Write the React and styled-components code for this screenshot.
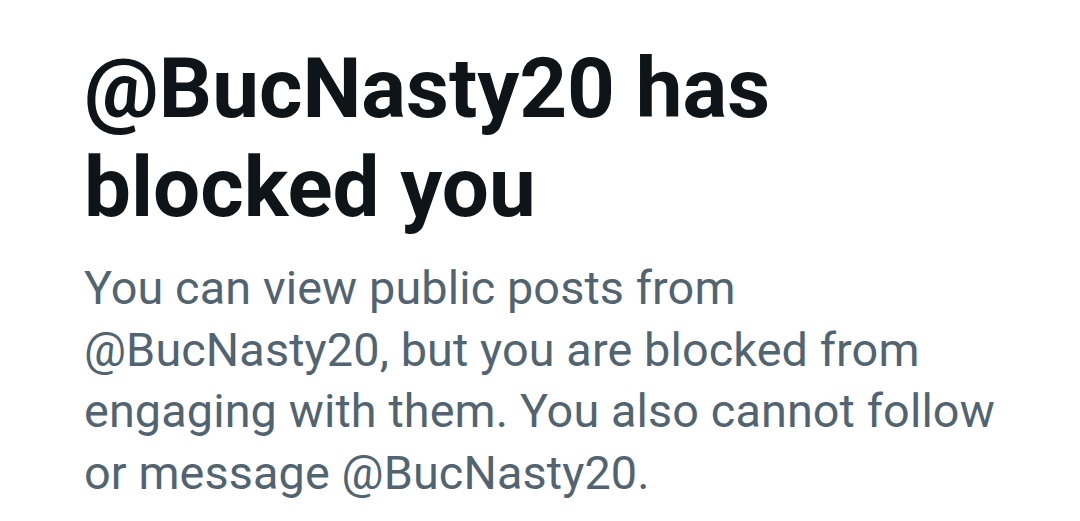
import React from "react";
import styled, { createGlobalStyle } from "styled-components";

const Global = createGlobalStyle`
  html, body { margin: 0; padding: 0; background: #ffffff; }
  body { font-family: Roboto, "Noto Sans", Arial, sans-serif; -webkit-font-smoothing: antialiased; }
`;

const Screen = styled.main`
  box-sizing: border-box;
  width: 1080px;
  min-height: 521px;
  padding: 39px 60px 0 84px;
  display: flex;
  flex-direction: column;
  gap: 21px;
  background: #ffffff;
`;

const Title = styled.h1`
  margin: 0;
  font-size: 83.5px;
  line-height: 99px;
  font-weight: 700;
  color: #0f1419;
  letter-spacing: 0;
`;

const Message = styled.p`
  margin: 0;
  font-size: 46.8px;
  line-height: 61.7px;
  font-weight: 400;
  color: #536471;
  letter-spacing: 0.1px;
`;

export default function App() {
  const handle = "@BucNasty20";
  return (
    <>
      <Global />
      <Screen>
        <Title>{handle} has blocked you</Title>
        <Message>
          You can view public posts from {handle}, but you are blocked from
          engaging with them. You also cannot follow or message {handle}.
        </Message>
      </Screen>
    </>
  );
}
